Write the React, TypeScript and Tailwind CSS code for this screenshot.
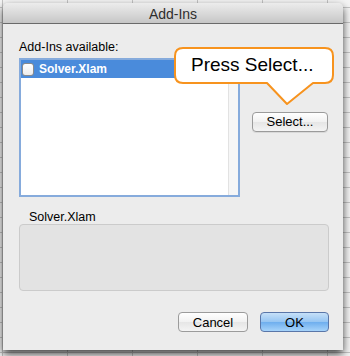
import React from "react";

const font = { fontFamily: '"Liberation Sans", Arial, sans-serif' };

export default function App() {
  return (
    <div
      className="relative w-[350px] h-[356px] overflow-hidden pt-[3px] pl-[3px] bg-[#f4f4f4] bg-[linear-gradient(to_right,#c4c4c4_1px,transparent_1px),linear-gradient(to_bottom,#c4c4c4_1px,transparent_1px)] bg-[length:65px_15px] bg-[position:2px_7px]"
      style={font}
    >
      <div className="relative flex flex-col w-[340px] h-[347px] rounded-t-[5px] bg-[#ececec] shadow-[0_4px_9px_rgba(0,0,0,0.75)]">
        {/* Title bar */}
        <div className="h-[21px] shrink-0 flex items-center justify-center rounded-t-[5px] border-b border-[#6a6a6a] bg-[linear-gradient(to_bottom,#ececec,#d6d6d6_60%,#c6c6c6)]">
          <span className="text-[14px] leading-none text-[#2e2e2e] pt-[1px]">Add-Ins</span>
        </div>

        <div className="flex flex-col pl-[16px] pr-[14px]">
          <div className="mt-[16px] h-[14px] text-[12.5px] leading-[14px] text-black">Add-Ins available:</div>
          <div className="mt-[4px] flex">
            {/* List box */}
            <div className="w-[221px] h-[139px] border-2 border-[#86abdc] bg-white flex">
              <div className="flex-1 flex flex-col">
                <div className="h-[18px] bg-[#4a8bdb] flex items-center pl-[1px]">
                  <div className="w-[12px] h-[13px] rounded-[3px] border border-[#8a8a8a] bg-[linear-gradient(to_bottom,#ffffff,#ececec)]" />
                  <span className="ml-[5px] text-[12px] leading-none font-semibold text-white">Solver.Xlam</span>
                </div>
              </div>
              <div className="w-[10px] h-full border-l border-[#e2e2e2] bg-[#f6f6f6]" />
            </div>
            {/* Right column */}
            <div className="ml-[12px] mt-[51px]">
              <button className="w-[76px] h-[20px] rounded-[4px] border border-[#9b9b9b] bg-[linear-gradient(to_bottom,#ffffff,#f1f1f1_50%,#e6e6e6_51%,#f4f4f4)] text-[13px] leading-none text-black shadow-[0_1px_0_rgba(0,0,0,0.08)]">
                Select...
              </button>
            </div>
          </div>

          <div className="mt-[13px] h-[14px] pl-[10px] text-[12.5px] leading-[14px] text-black">Solver.Xlam</div>
          <div className="w-[310px] h-[67px] rounded-[4px] border border-[#cbcbcb] bg-[#e3e3e3]" />

          <div className="mt-[21px] flex justify-end gap-[12px] pr-0">
            <button className="w-[70px] h-[20px] rounded-[4px] border border-[#9b9b9b] bg-[linear-gradient(to_bottom,#ffffff,#f1f1f1_50%,#e6e6e6_51%,#f4f4f4)] text-[13px] leading-none text-black">
              Cancel
            </button>
            <button className="w-[69px] h-[20px] rounded-[4px] border border-[#5a76a8] bg-[linear-gradient(to_bottom,#c6e0f8,#94c4f2_50%,#6eaeee_51%,#a6d3fa)] text-[13px] leading-none text-black">
              OK
            </button>
          </div>
        </div>
      </div>

      {/* Callout */}
      <div className="absolute left-[174px] top-[47px] w-[161px] h-[60px]">
        <svg width="161" height="60" viewBox="0 0 161 60" className="absolute inset-0">
          <path
            d="M 9 1 H 151 Q 159 1 159 9 V 28 Q 159 36 151 36 H 139 L 113 57 L 93 36 H 9 Q 1 36 1 28 V 9 Q 1 1 9 1 Z"
            fill="white"
            stroke="#f7931e"
            strokeWidth="2"
            strokeLinejoin="round"
          />
        </svg>
        <div className="relative pl-[17px] pt-[7px] text-[19px] leading-[22px] text-black">Press Select...</div>
      </div>
    </div>
  );
}
